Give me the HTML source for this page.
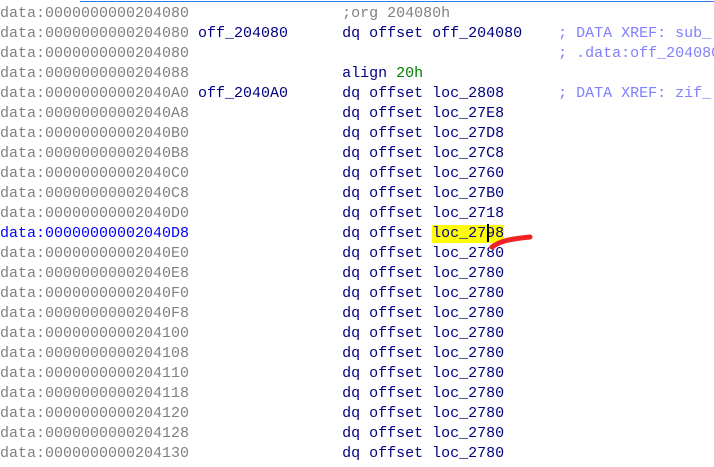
<!DOCTYPE html>
<html><head><meta charset="utf-8"><style>
html,body{margin:0;padding:0;background:#fff;width:714px;height:467px;overflow:hidden;position:relative}
pre{margin:0;position:absolute;left:0;top:4px;font-family:"Liberation Mono",monospace;font-size:15px;line-height:20px;color:#808080;white-space:pre}
.n{color:#000080}.c{color:#8080ff}.g{color:#008000}.b{color:#0000ff}
.hl{background:#ffff00;padding-bottom:1px}
#top{position:absolute;left:80px;top:1px;width:634px;height:1px;background:#2b7de0}
#cur{position:absolute;left:487px;top:224px;width:2px;height:18px;background:#000}
</style></head><body>
<div id="top"></div>
<pre>data:0000000000204080                 <span style="color:#808080">;org 204080h</span>
data:0000000000204080 <span class="n">off_204080</span>      <span class="n">dq offset off_204080</span>    <span class="c">; DATA XREF: sub_</span>
data:0000000000204080                                         <span class="c">; .data:off_204080</span>
data:0000000000204088                 <span class="n">align </span><span class="g">20h</span>
data:00000000002040A0 <span class="n">off_2040A0</span>      <span class="n">dq offset loc_2808</span>      <span class="c">; DATA XREF: zif_</span>
data:00000000002040A8                 <span class="n">dq offset loc_27E8</span>
data:00000000002040B0                 <span class="n">dq offset loc_27D8</span>
data:00000000002040B8                 <span class="n">dq offset loc_27C8</span>
data:00000000002040C0                 <span class="n">dq offset loc_2760</span>
data:00000000002040C8                 <span class="n">dq offset loc_27B0</span>
data:00000000002040D0                 <span class="n">dq offset loc_2718</span>
<span class="b">data:00000000002040D8</span>                 <span class="n">dq offset <span class="hl">loc_2798</span></span>
data:00000000002040E0                 <span class="n">dq offset loc_2780</span>
data:00000000002040E8                 <span class="n">dq offset loc_2780</span>
data:00000000002040F0                 <span class="n">dq offset loc_2780</span>
data:00000000002040F8                 <span class="n">dq offset loc_2780</span>
data:0000000000204100                 <span class="n">dq offset loc_2780</span>
data:0000000000204108                 <span class="n">dq offset loc_2780</span>
data:0000000000204110                 <span class="n">dq offset loc_2780</span>
data:0000000000204118                 <span class="n">dq offset loc_2780</span>
data:0000000000204120                 <span class="n">dq offset loc_2780</span>
data:0000000000204128                 <span class="n">dq offset loc_2780</span>
data:0000000000204130                 <span class="n">dq offset loc_2780</span></pre>
<div id="cur"></div>
<svg style="position:absolute;left:488px;top:232px" width="48" height="20"><path d="M4 15 C12 9,22 7,42 5" stroke="#ee2222" stroke-width="5" fill="none" stroke-linecap="round"/></svg>
</body></html>
